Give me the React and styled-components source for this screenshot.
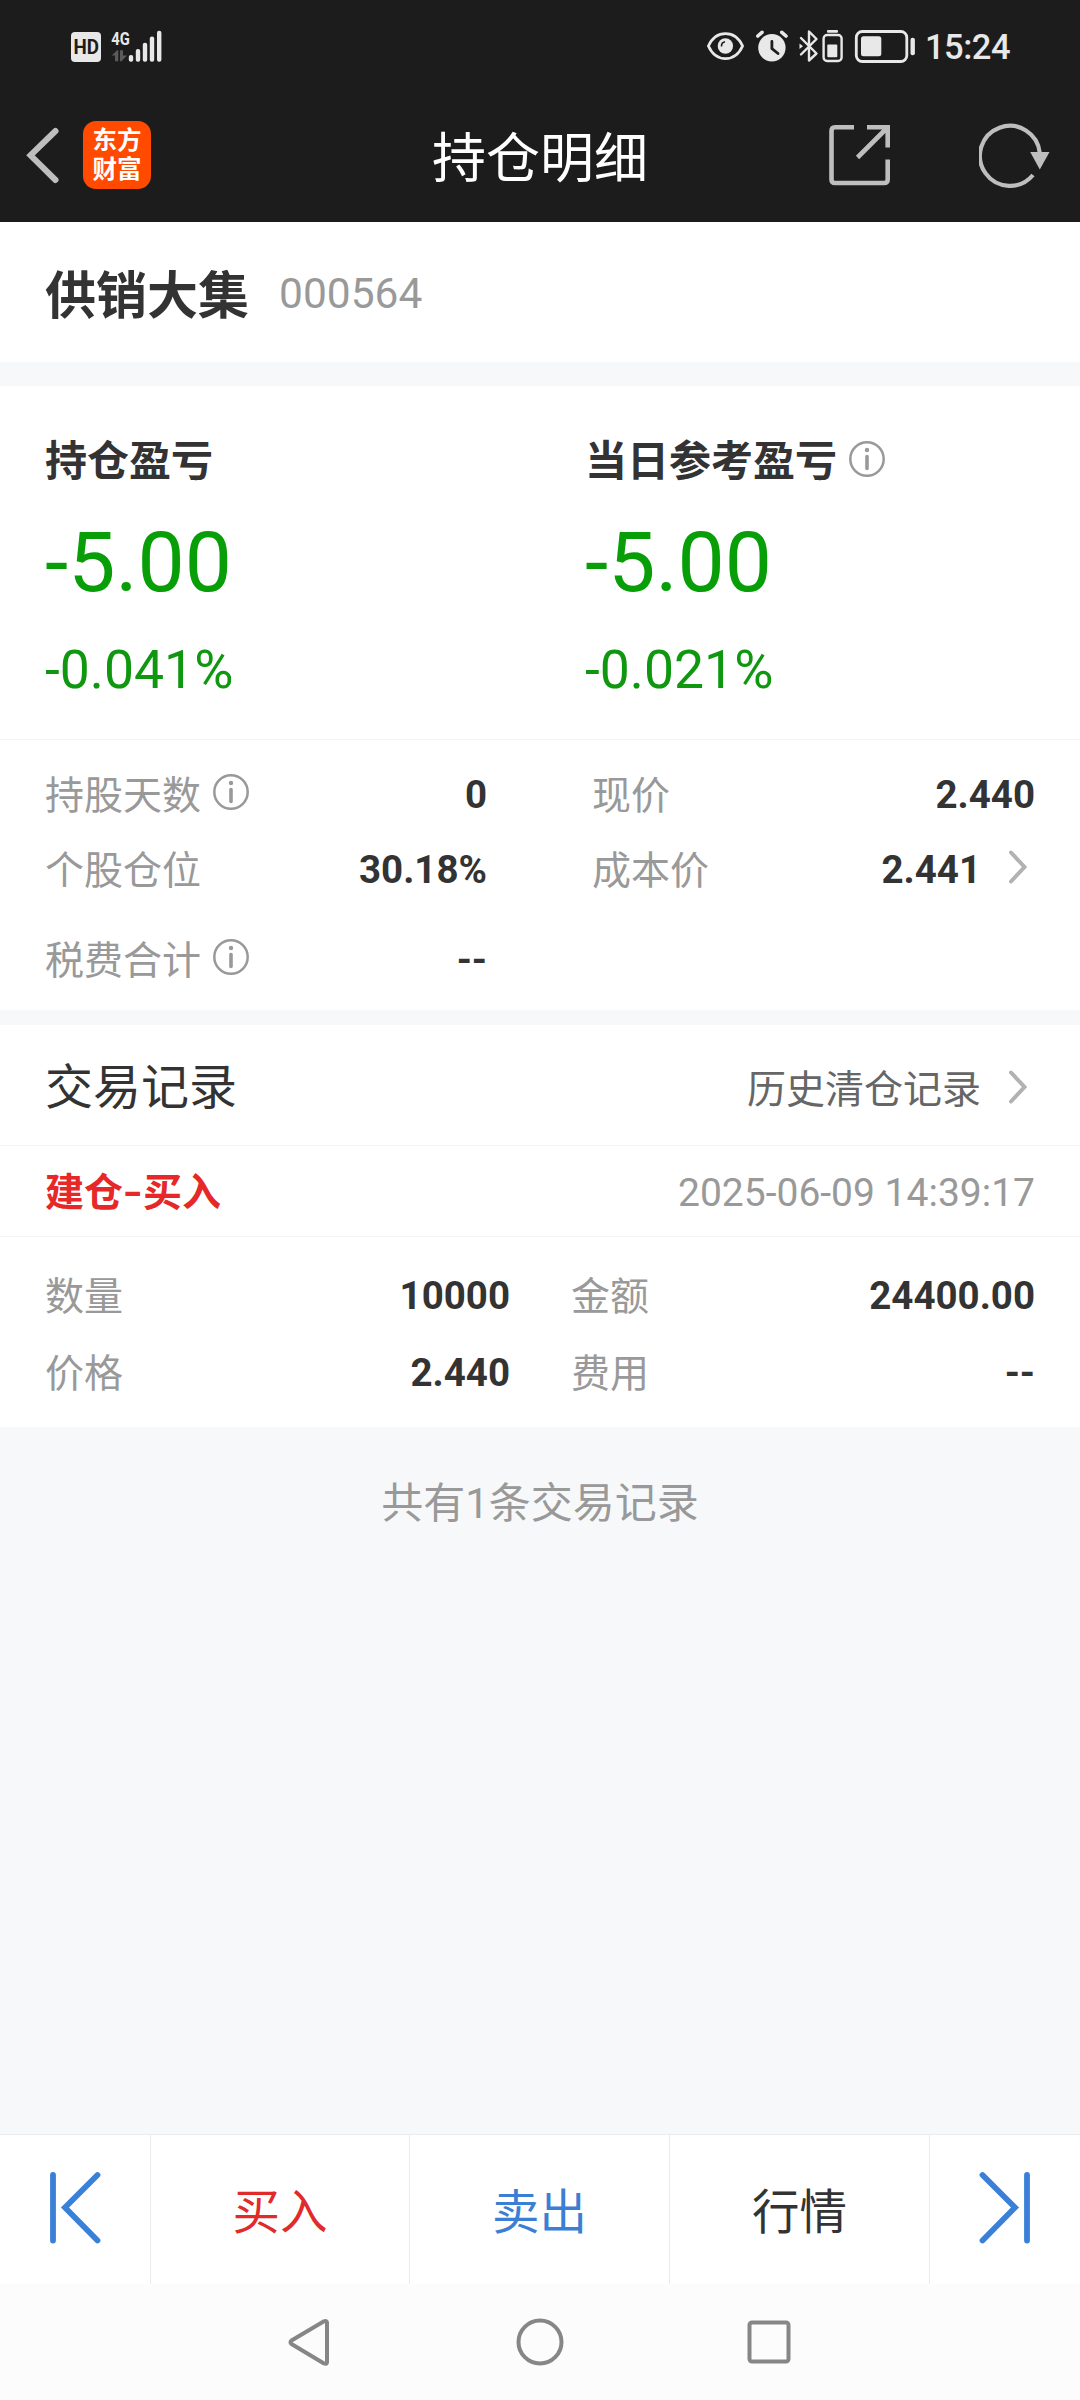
import React from "react";
import styled, { createGlobalStyle } from "styled-components";

const App = () => {
    return (
        <Page>
            <GlobalStyle />
            <Top>
                <StatusBar>
                    <StatusLeft />
                    <StatusRight />
                </StatusBar>
                <NavBar>
                    <NavSide>
                        <BackIcon />
                        <Logo>
                            <span>东方</span>
                            <span>财富</span>
                        </Logo>
                    </NavSide>
                    <Title>持仓明细</Title>
                    <NavSide $right>
                        <ShareIcon />
                        <RefreshIcon />
                    </NavSide>
                </NavBar>
            </Top>

            <Stock>
                <StockName>供销大集</StockName>
                <StockCode>000564</StockCode>
            </Stock>

            <Profit>
                <ProfitItem title="持仓盈亏" value="-5.00" percent="-0.041%" />
                <ProfitItem
                    title="当日参考盈亏"
                    value="-5.00"
                    percent="-0.021%"
                    info
                />
            </Profit>

            <Details>
                <Column>
                    <Field label="持股天数" value="0" info />
                    <Field label="个股仓位" value="30.18%" />
                    <Field label="税费合计" value="--" info spaced />
                </Column>
                <Column>
                    <Field label="现价" value="2.440" />
                    <Field label="成本价" value="2.441" link />
                </Column>
            </Details>

            <RecordsHead>
                <RecordsTitle>交易记录</RecordsTitle>
                <HistoryLink>
                    历史清仓记录
                    <Chevron />
                </HistoryLink>
            </RecordsHead>
            <TradeHead>
                <TradeType>
                    建仓<Dash>-</Dash>买入
                </TradeType>
                <TradeTime>2025-06-09 14:39:17</TradeTime>
            </TradeHead>
            <Trade>
                <Column>
                    <Field label="数量" value="10000" />
                    <Field label="价格" value="2.440" />
                </Column>
                <Column>
                    <Field label="金额" value="24400.00" />
                    <Field label="费用" value="--" />
                </Column>
            </Trade>
            <Total>共有1条交易记录</Total>

            <Actions>
                <Action>
                    <StepIcon />
                </Action>
                <Action $color="#e12a2a">买入</Action>
                <Action $color="#3b7fd4">卖出</Action>
                <Action $color="#333">行情</Action>
                <Action>
                    <StepIcon flip />
                </Action>
            </Actions>
            <SystemNav>
                <SystemIcons />
            </SystemNav>
        </Page>
    );
};

export default App;

const ProfitItem = ({ title, value, percent, info }) => (
    <ProfitCell>
        <ProfitTitle>
            {title}
            {info && <InfoIcon />}
        </ProfitTitle>
        <ProfitValue>{value}</ProfitValue>
        <ProfitPercent>{percent}</ProfitPercent>
    </ProfitCell>
);

const Field = ({ label, value, info, link, spaced }) => (
    <FieldRow $spaced={spaced}>
        <Label>
            {label}
            {info && <InfoIcon />}
        </Label>
        <Value>
            {value}
            {link && <Chevron />}
        </Value>
    </FieldRow>
);

const StatusLeft = () => (
    <svg width="92" height="46" viewBox="70 24 92 46" fill="#e8e8e8">
        <rect x="71" y="32" width="30" height="30" rx="4" />
        <text
            x="73.5"
            y="53.8"
            fontSize="19.5"
            fontWeight="700"
            fill="#1c1c1c"
            textLength="25.5"
            lengthAdjust="spacingAndGlyphs"
        >
            HD
        </text>
        <text
            x="111.3"
            y="44.6"
            fontSize="19"
            fontWeight="700"
            textLength="18.5"
            lengthAdjust="spacingAndGlyphs"
        >
            4G
        </text>
        <path
            d="M111.8 55.500 117 50.300H118.300V61.300H115V55.500ZM120 50.300H123V55.500H127L121.500 61.300H120Z"
            fill="#5a5a5a"
        />
        <rect x="128.8" y="55" width="4.4" height="6.8" rx="2" />
        <rect x="135.8" y="49" width="4.4" height="12.8" rx="2" />
        <rect x="142.8" y="42.7" width="4.4" height="19.1" rx="2" />
        <rect x="149.8" y="36.5" width="4.4" height="25.3" rx="2" />
        <rect x="157" y="30.7" width="4.4" height="31.1" rx="2" />
    </svg>
);

const StatusRight = () => (
    <StatusIcons>
        <svg width="210" height="34" viewBox="706 30 210 34" fill="none">
            <path
                d="M708.4 46C716 29.5 735 29.5 742.6 46C735 62.8 716 62.8 708.4 46Z"
                stroke="#e8e8e8"
                strokeWidth="2.8"
                strokeLinejoin="round"
            />
            <circle cx="725.4" cy="46" r="7.7" fill="#e8e8e8" />
            <path
                d="M721.5 46.5Q721.3 42.5 725 41.8"
                stroke="#1c1c1c"
                strokeWidth="1.6"
            />
            <circle cx="771.9" cy="47.7" r="13.7" fill="#e8e8e8" />
            <path
                d="M757.8 36 762 32.3M786 36 781.8 32.3"
                stroke="#e8e8e8"
                strokeWidth="3.6"
                strokeLinecap="round"
            />
            <path
                d="M771.9 41.5V48.5L778 53.5"
                stroke="#1c1c1c"
                strokeWidth="2.8"
                strokeLinecap="round"
            />
            <path
                d="M801 38 816.5 53.5 809 60.5V31.5L816.5 39 801 54.5"
                stroke="#e8e8e8"
                strokeWidth="2.4"
                strokeLinecap="round"
                strokeLinejoin="round"
            />
            <path d="M799.5 43.5 803 46.3 799.5 49Z" fill="#e8e8e8" />
            <rect x="827" y="30" width="11" height="2.7" rx="1" fill="#e8e8e8" />
            <rect
                x="823.6"
                y="35"
                width="18"
                height="26"
                rx="3.5"
                stroke="#e8e8e8"
                strokeWidth="2.4"
            />
            <rect x="827.3" y="44.5" width="10" height="12.8" rx="1" fill="#e8e8e8" />
            <rect
                x="856.3"
                y="31.5"
                width="50.5"
                height="30"
                rx="6"
                stroke="#e8e8e8"
                strokeWidth="2.8"
            />
            <rect x="861" y="36.3" width="20.3" height="20" rx="2.5" fill="#e8e8e8" />
            <rect x="910.5" y="37.7" width="4.4" height="17.5" rx="2" fill="#e8e8e8" />
        </svg>
        <Time>15:24</Time>
    </StatusIcons>
);

const BackIcon = () => (
    <svg width="34" height="60" viewBox="26 124 34 60" fill="none">
        <path
            d="M55.5 130 30.5 154.3 55.5 179"
            stroke="#bebebe"
            strokeWidth="6"
            strokeLinecap="round"
        />
    </svg>
);

const ShareIcon = () => (
    <svg width="62" height="62" viewBox="829 123.5 62 62" fill="none">
        <path
            d="M854 126.8H835Q831.5 126.8 831.5 130.5V179Q831.5 182.5 835 182.5H884Q887.7 182.5 887.7 179V159M867 126.8H887.7V147M887 127.5 857.5 157"
            stroke="#bebebe"
            strokeWidth="4.6"
        />
    </svg>
);

const RefreshIcon = () => (
    <svg width="71" height="66" viewBox="979.5 121 71 66" fill="none">
        <path
            d="M1033.5 174A30 30 0 1 1 1040.3 152"
            stroke="#bebebe"
            strokeWidth="4.2"
        />
        <path d="M1030.7 151H1050L1040.3 168.5Z" fill="#bebebe" />
    </svg>
);

const InfoIcon = () => (
    <Info viewBox="0 0 36 36" fill="none">
        <circle cx="18" cy="18" r="16.7" stroke="#999" strokeWidth="2.5" />
        <circle cx="18" cy="9" r="2.2" fill="#999" />
        <path
            d="M18 15.5V27.5"
            stroke="#999"
            strokeWidth="3.6"
            strokeLinecap="round"
        />
    </Info>
);

const Chevron = () => (
    <ChevronSvg viewBox="0 0 18 34" fill="none">
        <path
            d="M2 2.5 15.5 17 2 31.5"
            stroke="#b2b2b2"
            strokeWidth="4"
            strokeLinecap="round"
        />
    </ChevronSvg>
);

const StepIcon = ({ flip }) => (
    <StepSvg $flip={flip} viewBox="49 2171 52 74" fill="none">
        <path
            d="M53 2175V2240.5M97.5 2175 65 2207.5 97.5 2240.5"
            stroke="#3b80d8"
            strokeWidth="5.8"
            strokeLinecap="round"
        />
    </StepSvg>
);

const SystemIcons = () => (
    <svg
        width="506"
        height="50"
        viewBox="287 2317 506 50"
        fill="none"
        stroke="#868686"
        strokeWidth="4"
        strokeLinejoin="round"
    >
        <path d="M327 2322.5V2362.5Q326.5 2364.5 324 2363.5L291.5 2344Q289.5 2342.2 291.5 2340.5L324 2321.3Q326.5 2320.5 327 2322.5Z" />
        <circle cx="540" cy="2342" r="21.5" />
        <rect x="749.5" y="2322.5" width="39" height="39" rx="2.5" />
    </svg>
);

const GlobalStyle = createGlobalStyle`
    * {
        box-sizing: border-box;
    }
    body {
        margin: 0;
        background: #f7f8fa;
        font-family: Roboto, "Noto Sans CJK SC", sans-serif;
    }
    svg {
        display: block;
        flex: none;
    }
`;

const Page = styled.div`
    width: 1080px;
    height: 2400px;
    display: flex;
    flex-direction: column;
    background: #f7f8fa;
    color: #333;
`;

const Top = styled.header`
    height: 222px;
    background: #1c1c1c;
`;

const StatusBar = styled.div`
    height: 86px;
    padding: 8px 71px 0 70px;
    display: flex;
    justify-content: space-between;
    align-items: center;
`;

const StatusIcons = styled.div`
    display: flex;
    align-items: center;
    gap: 9px;
`;

const Time = styled.span`
    width: 84px;
    color: #e8e8e8;
    font-size: 34.5px;
    line-height: 34px;
    font-weight: 500;
    letter-spacing: -0.5px;
`;

const NavBar = styled.div`
    height: 136px;
    display: grid;
    grid-template-columns: 1fr auto 1fr;
    align-items: center;
`;

const NavSide = styled.div`
    display: flex;
    align-items: center;
    justify-content: ${(props) => (props.$right ? "flex-end" : "flex-start")};
    gap: ${(props) => (props.$right ? "88px" : "23px")};
    padding: 1px 30px 0 26px;
`;

const Logo = styled.div`
    width: 68px;
    height: 68px;
    border-radius: 13px;
    background: #ff4a00;
    color: white;
    display: flex;
    flex-direction: column;
    align-items: center;
    justify-content: center;
    font-size: 24.5px;
    font-weight: 700;
    line-height: 29px;
`;

const Title = styled.h1`
    margin: 12px 0 0;
    color: white;
    font-size: 54px;
    font-weight: 400;
    line-height: 60px;
`;

const Stock = styled.section`
    height: 140px;
    padding: 4px 45px 0;
    display: flex;
    align-items: center;
    gap: 30px;
    background: white;
`;

const StockName = styled.h2`
    margin: 5px 0 0;
    font-size: 51px;
    font-weight: 700;
    line-height: 60px;
`;

const StockCode = styled.span`
    color: #999;
    font-size: 42.5px;
    line-height: 60px;
`;

const Profit = styled.section`
    height: 354px;
    margin-top: 24px;
    padding: 46px 0 0 45px;
    display: grid;
    grid-template-columns: 540px 1fr;
    background: white;
    border-bottom: 1px solid #f4f4f5;
`;

const ProfitCell = styled.div`
    display: flex;
    flex-direction: column;
`;

const ProfitTitle = styled.div`
    display: flex;
    align-items: center;
    font-size: 42px;
    font-weight: 700;
    line-height: 60px;
`;

const ProfitValue = styled.div`
    margin-top: 21px;
    color: #089e08;
    font-size: 84px;
    line-height: 100px;
`;

const ProfitPercent = styled.div`
    margin-top: 27px;
    color: #0f980f;
    font-size: 53.5px;
    line-height: 60px;
`;

const Column = styled.div`
    display: flex;
    flex-direction: column;
`;

const Details = styled.section`
    height: 270px;
    padding: 18px 45px 0;
    display: grid;
    grid-template-columns: 442px 443px;
    justify-content: space-between;
    align-items: start;
    background: white;
`;

const FieldRow = styled.div`
    height: 75px;
    margin-top: ${(props) => (props.$spaced ? "15px" : "0")};
    display: flex;
    justify-content: space-between;
    align-items: center;
    font-size: 39px;
    line-height: 50px;
`;

const Label = styled.span`
    display: flex;
    align-items: center;
    color: #999;
`;

const Value = styled.span`
    padding-bottom: 1px;
    display: flex;
    align-items: center;
    font-size: 38.5px;
    font-weight: 700;
`;

const Info = styled.svg`
    width: 36px;
    height: 36px;
    margin: 0 0 7px 12px;
`;

const ChevronSvg = styled.svg`
    width: 18px;
    height: 34px;
    margin: 0 8px 6px 28px;
`;

const RecordsHead = styled.div`
    height: 121px;
    margin-top: 15px;
    padding: 6px 45px 0;
    display: flex;
    justify-content: space-between;
    align-items: center;
    background: white;
    border-bottom: 1px solid #f4f4f5;
`;

const RecordsTitle = styled.h3`
    margin: 0;
    font-size: 48px;
    font-weight: 400;
    line-height: 60px;
`;

const HistoryLink = styled.div`
    padding-top: 4px;
    display: flex;
    align-items: center;
    color: #666;
    font-size: 39px;
    line-height: 50px;
`;

const TradeHead = styled.div`
    height: 91px;
    padding: 4px 45px 0;
    display: flex;
    justify-content: space-between;
    align-items: center;
    background: white;
    border-bottom: 1px solid #f4f4f5;
    font-size: 39px;
    line-height: 50px;
`;

const TradeType = styled.span`
    display: flex;
    color: #e62828;
    font-weight: 700;
`;

const Dash = styled.span`
    width: 20px;
    display: flex;
    justify-content: center;
    transform: scaleX(1.35);
`;

const TradeTime = styled.span`
    color: #999;
`;

const Trade = styled(Details)`
    height: 190px;
    padding-top: 22px;
    grid-template-columns: 465px 464px;

    ${Column} {
        gap: 2px;
    }
`;

const Total = styled.div`
    margin-top: 52px;
    text-align: center;
    color: #999;
    font-size: 42px;
    line-height: 50px;
`;

const Actions = styled.footer`
    height: 150px;
    margin-top: auto;
    display: grid;
    grid-template-columns: 151px 259px 260px 260px 150px;
    background: white;
    border-top: 1px solid #ebebed;
`;

const Action = styled.div`
    padding-top: 7px;
    display: flex;
    align-items: center;
    justify-content: center;
    border-right: 1px solid #ebebed;
    color: ${(props) => props.$color};
    font-size: 47.5px;
    line-height: 60px;

    &:last-child {
        border-right: none;
    }
`;

const StepSvg = styled.svg`
    width: 52px;
    height: 74px;
    margin-bottom: 10px;
    transform: ${(props) => (props.$flip ? "scaleX(-1)" : "none")};
`;

const SystemNav = styled.nav`
    height: 116px;
    display: flex;
    align-items: center;
    justify-content: center;
    background: #fcfcfc;
`;
